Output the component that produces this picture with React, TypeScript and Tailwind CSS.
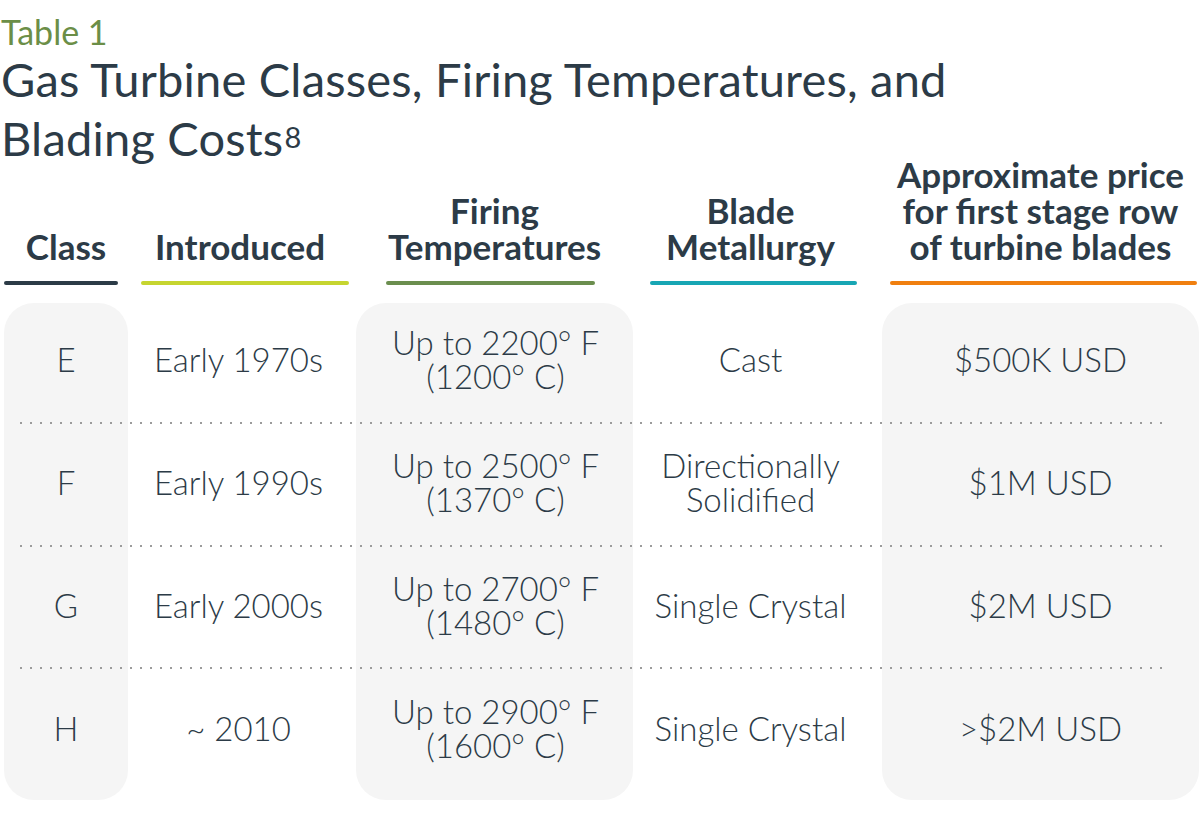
import React from 'react';

const cols = [
  { head: ['Class'], line: 'bg-[#2c3b47] ml-0 mr-[10px]', pad: '' },
  { head: ['Introduced'], line: 'bg-[#c6d530] ml-[13px] mr-[7px]', pad: 'pr-[4px]' },
  { head: ['Firing', 'Temperatures'], line: 'bg-[#6b8e4e] ml-[30px] mr-[38px]', pad: '' },
  { head: ['Blade', 'Metallurgy'], line: 'bg-[#17a6b4] ml-[17px] mr-[25px]', pad: 'pr-[14px]' },
  { head: ['Approximate price', 'for first stage row', 'of turbine blades'], line: 'bg-[#f07f0f] ml-[8px] mr-[2px]', pad: '' },
];

const rows = [
  ['E', 'Early 1970s', ['Up to 2200° F', '(1200° C)'], ['Cast'], '$500K USD'],
  ['F', 'Early 1990s', ['Up to 2500° F', '(1370° C)'], ['Directionally', 'Solidified'], '$1M USD'],
  ['G', 'Early 2000s', ['Up to 2700° F', '(1480° C)'], ['Single Crystal'], '$2M USD'],
  ['H', '~ 2010', ['Up to 2900° F', '(1600° C)'], ['Single Crystal'], '>$2M USD'],
] as const;

const colStart = ['col-start-1', 'col-start-2', 'col-start-3', 'col-start-4', 'col-start-5'];
const colPad = ['', 'pr-[7px]', 'pl-[2px]', 'pr-[14px]', ''];
const rowStart = ['row-start-1', 'row-start-2', 'row-start-3', 'row-start-4'];
const rowPad = ['pb-[8px]', 'pb-[5px]', 'pb-[4px]', 'pb-[12px]'];

const gridCols = 'grid-cols-[124px_228px_277px_249px_317px]';

export default function App() {
  return (
    <div className="w-[1201px] h-[815px] bg-white text-[#2c3b47] font-['Lato',sans-serif] overflow-hidden">
      {/* Title */}
      <div className="pl-[1px] pt-[12px]">
        <div className="text-[34px] leading-[40px] font-normal text-[#6b8e47]">Table 1</div>
        <h1 className="text-[47px] leading-[59px] font-normal -mt-[2px] tracking-[0.2px]">
          Gas Turbine Classes, Firing Temperatures, and
          <br />
          Blading Costs<span className="text-[29px] leading-none align-[8px] ml-[1px] tracking-normal">8</span>
        </h1>
      </div>

      <div className="pl-[4px]">
        {/* Header */}
        <div className={`grid ${gridCols} -mt-[12px]`}>
          {cols.map((c, i) => (
            <div key={i} className="flex flex-col justify-end">
              <div className={`text-center text-[35px] leading-[36px] font-bold ${c.pad}`}>
                {c.head.map((h) => (
                  <div key={h}>{h}</div>
                ))}
              </div>
              <div className={`h-[4px] rounded-full mt-[17px] ${c.line}`} />
            </div>
          ))}
        </div>

        {/* Body */}
        <div className={`grid ${gridCols} grid-rows-[120px_123px_122px_132px] mt-[18px]`}>
          <div className="col-start-1 row-start-1 row-end-5 bg-[#f5f5f5] rounded-[30px]" />
          <div className="col-start-3 row-start-1 row-end-5 bg-[#f5f5f5] rounded-[30px]" />
          <div className="col-start-5 row-start-1 row-end-5 bg-[#f5f5f5] rounded-[30px]" />

          {[0, 1, 2].map((r) => (
            <div
              key={'sep' + r}
              className={`${rowStart[r]} col-start-1 col-end-6 self-end ml-[12px] w-[1150px] h-[2px] translate-y-[1px] bg-[radial-gradient(circle,#9b9b9b_1.1px,transparent_1.4px)] bg-[length:10px_2px]`}
            />
          ))}

          {rows.map((row, r) =>
            row.map((cell, c) => (
              <div
                key={r + '-' + c}
                className={`${rowStart[r]} ${colStart[c]} ${rowPad[r]} ${colPad[c]} flex flex-col items-center justify-center text-center text-[33px] leading-[34px] font-light`}
              >
                {Array.isArray(cell) ? cell.map((t) => <div key={t}>{t}</div>) : cell}
              </div>
            ))
          )}
        </div>
      </div>
    </div>
  );
}
